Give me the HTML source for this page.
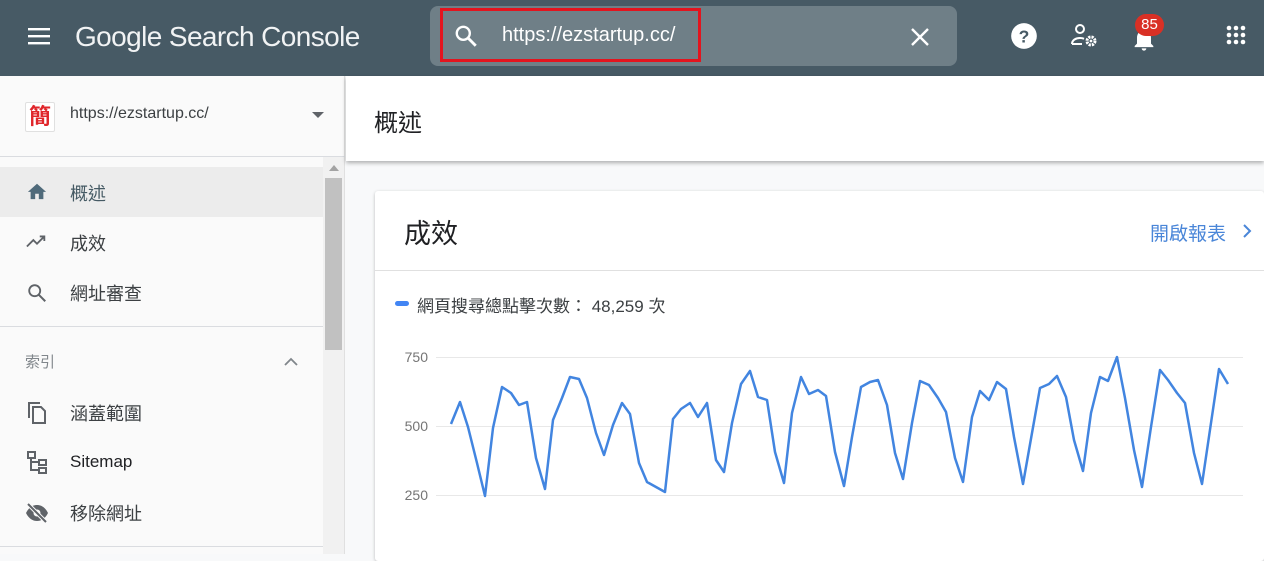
<!DOCTYPE html>
<html><head><meta charset="utf-8"><style>
*{margin:0;padding:0;box-sizing:border-box}
body{width:1264px;height:554px;overflow:hidden;position:relative;font-family:"Liberation Sans","Noto Sans CJK TC",sans-serif;background:#f8f9fa}
.abs{position:absolute}
.hdr{left:0;top:0;width:1264px;height:76px;background:#475a65}
.t{white-space:nowrap}
</style></head><body>
<div class="abs hdr"></div>
<svg class="abs" style="left:28px;top:28px" width="24" height="20"><rect x="0" y="0" width="22" height="2.4" fill="#fff"/><rect x="0" y="7" width="22" height="2.4" fill="#fff"/><rect x="0" y="14" width="22" height="2.4" fill="#fff"/></svg>
<div class="abs t" style="left:75px;top:21px;font-size:28px;color:#f1f3f4;letter-spacing:-0.6px">Google Search Console</div>
<div class="abs" style="left:430px;top:6px;width:527px;height:60px;background:#6f7f87;border-radius:8px"></div>
<div class="abs" style="left:440px;top:8px;width:261px;height:54px;border:3px solid #e3141e"></div>
<svg class="abs" style="left:453px;top:23px" width="26" height="26" viewBox="0 0 24 24"><circle cx="9.5" cy="9.5" r="6" fill="none" stroke="#fff" stroke-width="2.2"/><path d="M14 14l7 7" stroke="#fff" stroke-width="2.6"/></svg>
<div class="abs t" style="left:502px;top:24px;font-size:20px;color:#fff">https://ezstartup.cc/</div>
<svg class="abs" style="left:908px;top:25px" width="24" height="24" viewBox="0 0 24 24"><path d="M4 4L20 20M20 4L4 20" stroke="#fff" stroke-width="2.4"/></svg>
<svg class="abs" style="left:1010px;top:22px" width="28" height="28" viewBox="0 0 24 24"><circle cx="12" cy="12" r="11" fill="#fff"/><text x="12" y="17.5" text-anchor="middle" font-size="15" font-weight="bold" font-family="Liberation Sans" fill="#475a65">?</text></svg>
<svg class="abs" style="left:1070px;top:23px" width="30" height="26" viewBox="0 0 30 26"><circle cx="10" cy="6" r="4" fill="none" stroke="#fff" stroke-width="2"/><path d="M2 21c0-4 4-6 8-6 2 0 3 .3 4 .8M2 21h10" fill="none" stroke="#fff" stroke-width="2"/><circle cx="21" cy="18" r="4" fill="none" stroke="#fff" stroke-width="3" stroke-dasharray="2.2 1"/><circle cx="21" cy="18" r="1.4" fill="#fff"/></svg>
<svg class="abs" style="left:1130px;top:25px" width="28" height="28" viewBox="0 0 24 24"><path d="M12 22a2 2 0 0 0 2-2h-4a2 2 0 0 0 2 2zm6-6V11c0-3-1.6-5.6-4.5-6.3V4h-3v.7C7.6 5.4 6 8 6 11v5l-2 2v1h16v-1l-2-2z" fill="#fff"/></svg>
<div class="abs t" style="left:1135px;top:14px;width:29px;height:22px;border-radius:11px;background:#d93025;color:#fff;font-size:15px;text-align:center;line-height:22px">85</div>
<svg class="abs" style="left:1226px;top:25px" width="22" height="22"><g fill="#fff"><circle cx="3" cy="3" r="2.3"/><circle cx="10" cy="3" r="2.3"/><circle cx="17" cy="3" r="2.3"/><circle cx="3" cy="10" r="2.3"/><circle cx="10" cy="10" r="2.3"/><circle cx="17" cy="10" r="2.3"/><circle cx="3" cy="17" r="2.3"/><circle cx="17" cy="17" r="2.3"/><circle cx="10" cy="17" r="2.3"/></g></svg>

<div class="abs" style="left:0;top:76px;width:345px;height:478px;background:#fafafa;border-right:1px solid #e0e0e0"></div>
<div class="abs" style="left:25px;top:102px;width:30px;height:30px;border:1px solid #e0e0e0;border-radius:2px;background:#fff;color:#e0262b;font-size:22px;text-align:center;line-height:28px;font-weight:bold">簡</div>
<div class="abs t" style="left:70px;top:105px;font-size:16px;color:#3c4043">https://ezstartup.cc/</div>
<svg class="abs" style="left:312px;top:112px" width="14" height="8"><path d="M0 0h12L6 6z" fill="#5f6368"/></svg>
<div class="abs" style="left:0;top:156px;width:345px;height:1px;background:#dadce0"></div>
<div class="abs" style="left:0;top:167px;width:323px;height:50px;background:#ececec"></div>
<div class="abs" style="left:323px;top:157px;width:21px;height:397px;background:#f1f1f1"></div>
<div class="abs" style="left:325px;top:178px;width:17px;height:172px;background:#c1c1c1"></div>
<svg class="abs" style="left:329px;top:165px" width="10" height="6"><path d="M0 6L5 0L10 6z" fill="#a3a3a3"/></svg>
<svg class="abs" style="left:26px;top:181px" width="22" height="20" viewBox="0 0 24 22"><path d="M10 20v-6h4v6h5v-8h3L12 3 2 12h3v8z" fill="#4f6a7a"/></svg>
<div class="abs t" style="left:70px;top:180px;font-size:18px;color:#455a64">概述</div>
<svg class="abs" style="left:26px;top:233px" width="22" height="16" viewBox="0 0 24 16"><path d="M1 14l7-7 4 4 7-7M15 3h5v5" fill="none" stroke="#5f6368" stroke-width="2"/></svg>
<div class="abs t" style="left:70px;top:230px;font-size:18px;color:#3c4043">成效</div>
<svg class="abs" style="left:26px;top:282px" width="22" height="22" viewBox="0 0 24 24"><circle cx="9.5" cy="9.5" r="6" fill="none" stroke="#5f6368" stroke-width="2"/><path d="M14 14l7 7" stroke="#5f6368" stroke-width="2.2"/></svg>
<div class="abs t" style="left:70px;top:280px;font-size:18px;color:#3c4043">網址審查</div>
<div class="abs" style="left:0;top:326px;width:323px;height:1px;background:#dadce0"></div>
<div class="abs t" style="left:25px;top:351px;font-size:15px;color:#80868b">索引</div>
<svg class="abs" style="left:284px;top:357px" width="14" height="9"><path d="M1 8l6-6 6 6" fill="none" stroke="#80868b" stroke-width="1.8"/></svg>
<svg class="abs" style="left:27px;top:401px" width="20" height="24" viewBox="0 0 20 24"><path d="M2 17V2h11" fill="none" stroke="#5f6368" stroke-width="2"/><path d="M6 6h8l4 4v12H6z" fill="none" stroke="#5f6368" stroke-width="2"/></svg>
<div class="abs t" style="left:70px;top:400px;font-size:18px;color:#3c4043">涵蓋範圍</div>
<svg class="abs" style="left:27px;top:451px" width="22" height="24" viewBox="0 0 22 24"><g fill="none" stroke="#5f6368" stroke-width="2"><rect x="1" y="1" width="7" height="6"/><rect x="12" y="9" width="7" height="5"/><rect x="12" y="17" width="7" height="5"/><path d="M4 7v12h8M4 11h8"/></g></svg>
<div class="abs t" style="left:70px;top:452px;font-size:17px;color:#202124">Sitemap</div>
<svg class="abs" style="left:25px;top:503px" width="24" height="20" viewBox="0 0 24 20"><path d="M1 10C4 4 8 2 12 2s8 2 11 8c-3 6-7 8-11 8S4 16 1 10z" fill="#5f6368"/><circle cx="12" cy="10" r="3.5" fill="#fafafa"/><path d="M3 1l18 18" stroke="#fafafa" stroke-width="4"/><path d="M3 1l18 18" stroke="#5f6368" stroke-width="2"/></svg>
<div class="abs t" style="left:70px;top:500px;font-size:18px;color:#3c4043">移除網址</div>
<div class="abs" style="left:0;top:546px;width:323px;height:1px;background:#dadce0"></div>

<div class="abs" style="left:346px;top:76px;width:918px;height:85px;background:#fff;box-shadow:0 2px 4px rgba(0,0,0,.3)"></div>
<div class="abs t" style="left:374px;top:103px;font-size:24px;color:#202124">概述</div>
<div class="abs" style="left:375px;top:191px;width:889px;height:370px;background:#fff;border-radius:3px;box-shadow:0 1px 3px rgba(0,0,0,.25)"></div>
<div class="abs t" style="left:404px;top:212px;font-size:27px;color:#202124">成效</div>
<div class="abs t" style="left:1150px;top:219px;font-size:19px;color:#4a86d8">開啟報表</div>
<svg class="abs" style="left:1242px;top:223px" width="10" height="16"><path d="M2 2l6 6-6 6" fill="none" stroke="#4a86d8" stroke-width="2"/></svg>
<div class="abs" style="left:375px;top:270px;width:889px;height:1px;background:#e0e0e0"></div>
<div class="abs" style="left:395px;top:301px;width:14px;height:5px;border-radius:3px;background:#4285f4"></div>
<div class="abs t" style="left:417px;top:292px;font-size:17px;color:#3c4043">網頁搜尋總點擊次數： 48,259 次</div>
<svg class="abs" style="left:0;top:0" width="1264" height="554">
<g font-family="Liberation Sans" font-size="14" fill="#757575" text-anchor="end"><text x="428" y="362">750</text><text x="428" y="431">500</text><text x="428" y="500">250</text></g>
<g stroke="#e8e8e8" stroke-width="1"><path d="M436 357.5H1243M436 426.5H1243M436 495.5H1243"/></g>
<polyline fill="none" stroke="#4285e0" stroke-width="2.5" stroke-linejoin="round" points="451,424 460,402 468,427 477,463 485,496 493,428 502,387 511,393 519,405 527,402 536,458 545,489 553,420 562,398 570,377 579,379 587,398 596,433 604,455 613,425 622,403 630,414 639,463 647,482 656,487 665,492 673,419 681,409 690,403 698,417 707,403 716,460 724,472 732,423 741,384 750,371 758,397 767,400 775,452 784,483 792,413 801,377 809,394 818,390 826,396 835,452 844,486 852,437 861,387 870,382 878,380 887,405 895,453 903,479 912,423 920,381 929,385 938,398 946,412 955,458 963,482 972,417 980,391 989,400 997,382 1006,389 1014,437 1023,484 1032,433 1040,388 1049,384 1057,376 1066,397 1074,440 1083,471 1091,413 1100,377 1108,381 1117,357 1125,398 1134,450 1142,487 1151,427 1160,370 1168,380 1177,393 1185,403 1194,453 1202,484 1211,423 1219,369 1228,384"/>
</svg>
</body></html>
